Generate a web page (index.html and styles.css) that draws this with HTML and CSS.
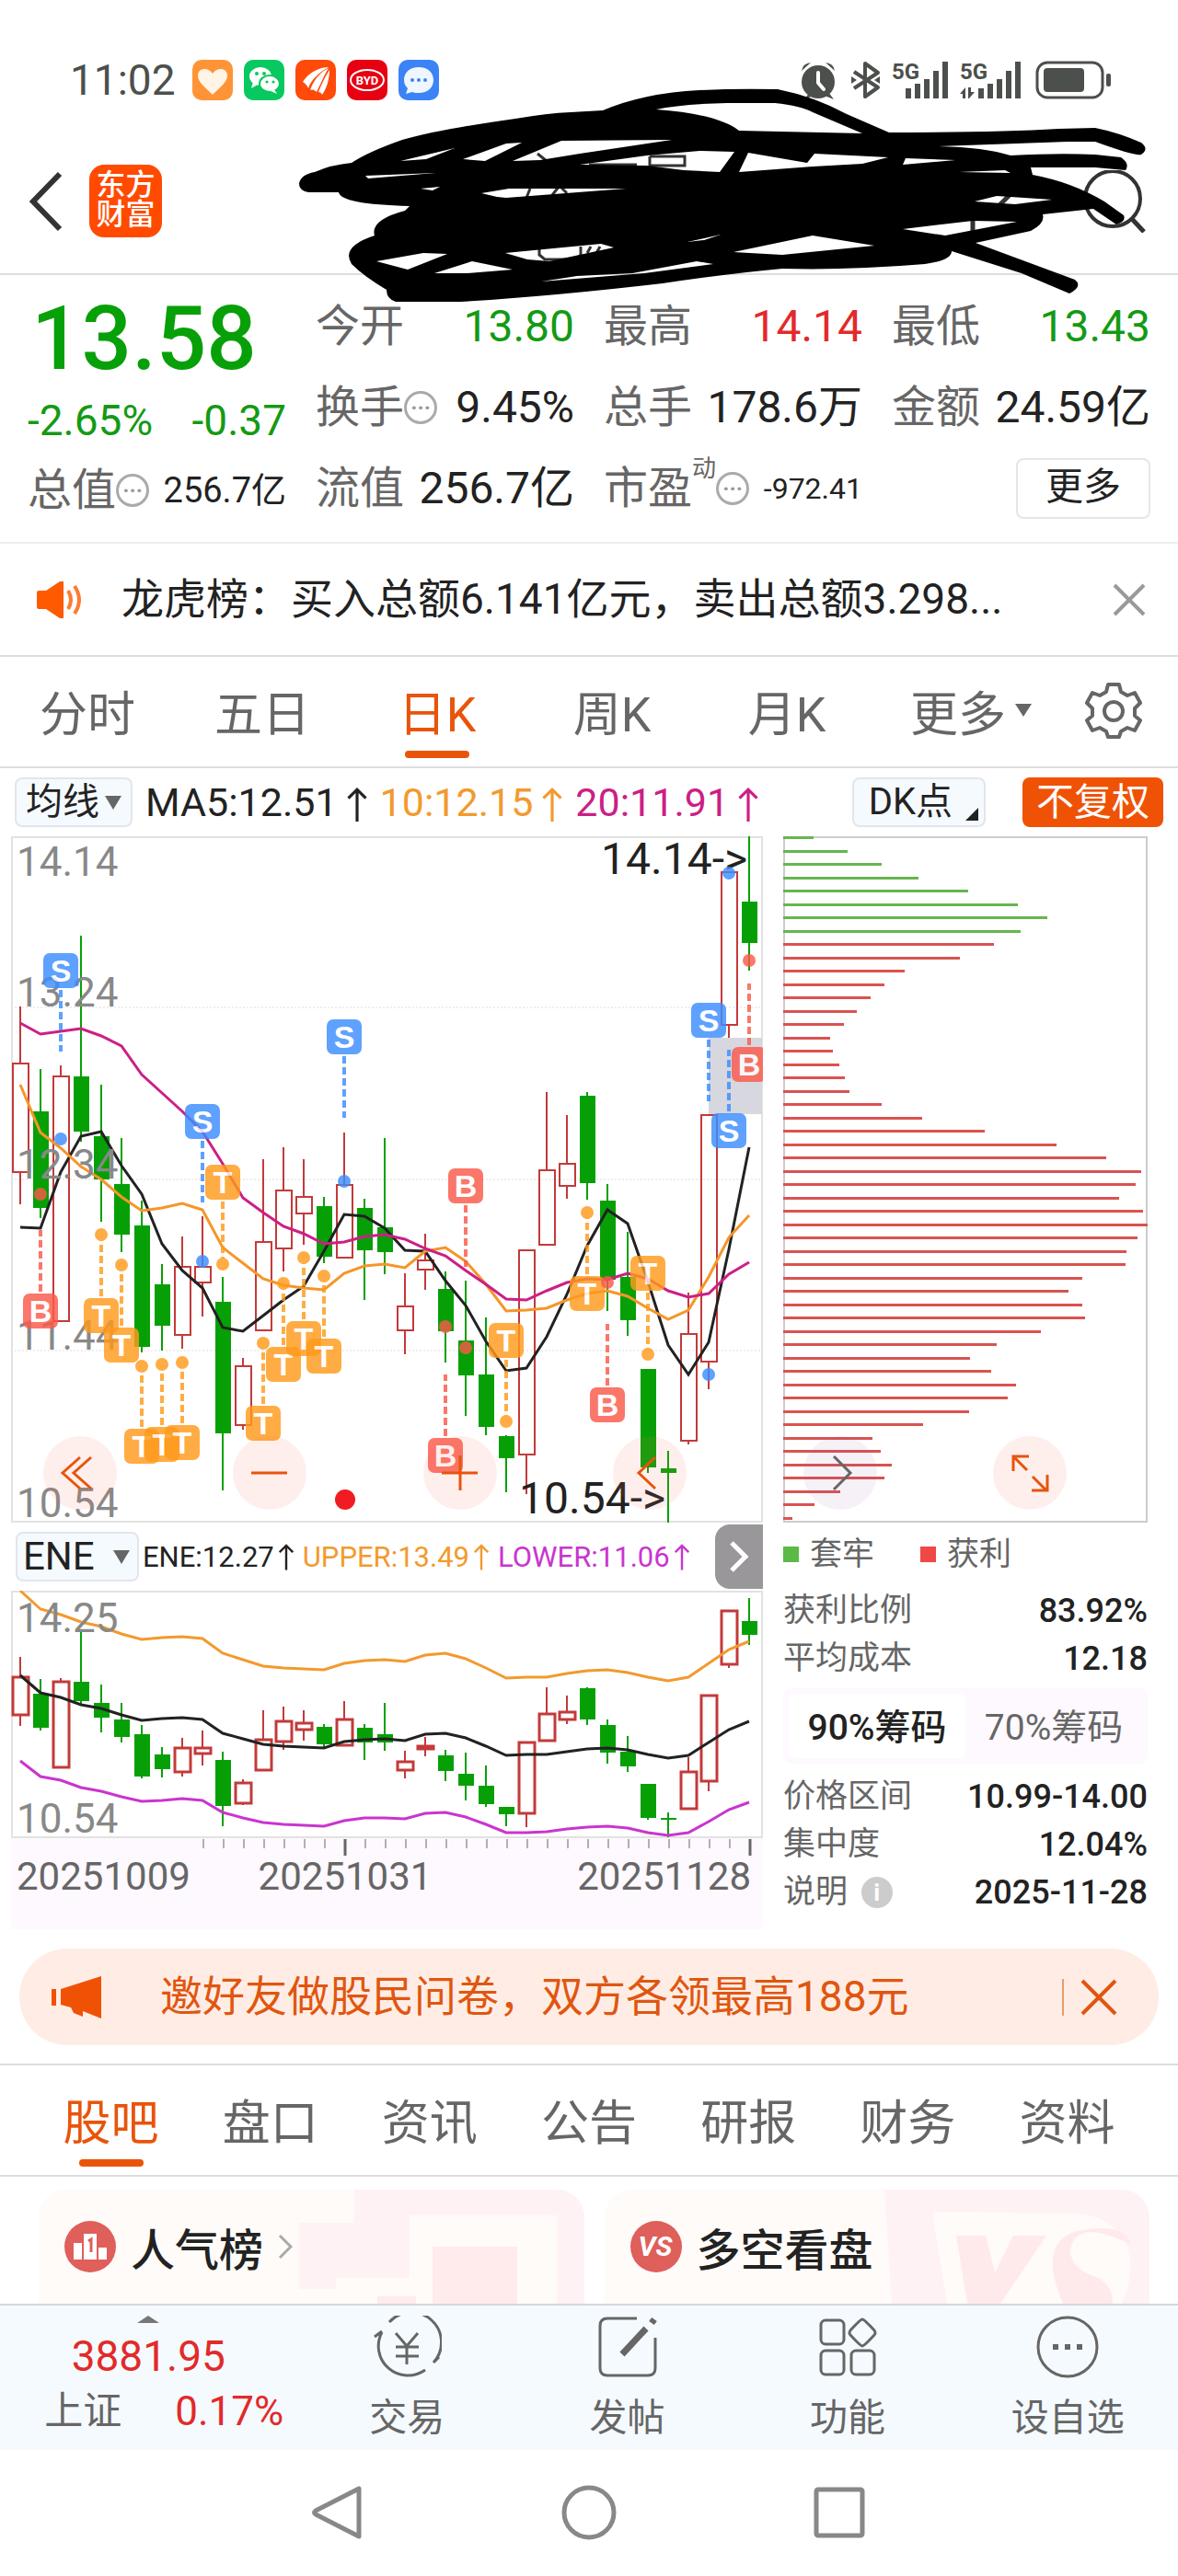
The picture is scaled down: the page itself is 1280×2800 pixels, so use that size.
FILE: index.html
```
<!DOCTYPE html>
<html lang="zh-CN">
<head>
    <meta charset="UTF-8">
    <meta name="viewport" content="width=device-width, initial-scale=1.0">
    <title>日K</title>
    <link rel="stylesheet" href="styles.css">
</head>
<body>
    <div class="status-bar">
        <span class="time">11:02</span>
        <div class="apps">
            <svg class="app app-health" viewBox="0 0 44 44"><path fill="#fff4e6" d="M22 38C12 28 6 24 6 17c0-8 11-10 16-2 5-8 16-6 16 2 0 7-6 11-16 21z"/></svg>
            <svg class="app app-wechat" viewBox="0 0 44 44"><ellipse cx="18" cy="18" rx="12" ry="10" fill="#fff"/><path d="M10 24l-2 7 7-4z" fill="#fff"/><ellipse cx="28" cy="26" rx="11" ry="9" fill="#fff" stroke="#07c95f" stroke-width="2"/><path d="M33 32l3 5-7-3z" fill="#fff"/><g fill="#07c95f"><circle cx="14" cy="15" r="2"/><circle cx="22" cy="15" r="2"/><circle cx="25" cy="24" r="1.6"/><circle cx="32" cy="24" r="1.6"/></g></svg>
            <svg class="app app-news" viewBox="0 0 44 44"><g fill="#fff"><path d="M8 24C14 14 26 8 36 8 26 14 18 20 14 31c-1-3-3-5-6-7z"/><path d="M16 33C20 22 26 14 36 9c-5 8-8 16-13 26-2-2-4-3-7-2z"/><path d="M25 35c3-8 7-16 12-24 0 10-3 20-8 27-1-2-2-3-4-3z"/></g></svg>
            <svg class="app app-byd" viewBox="0 0 44 44"><ellipse cx="22" cy="22" rx="18" ry="11" fill="none" stroke="#fff" stroke-width="2"/><text x="22" y="27" text-anchor="middle" class="byd">BYD</text></svg>
            <svg class="app app-chat" viewBox="0 0 44 44"><path fill="#eef6ff" d="M22 8c10 0 16 6 16 14s-6 14-16 14c-3 0-5 0-7-1l-7 2 2-6c-3-3-4-6-4-9C6 14 12 8 22 8z"/><g fill="#3b83f6"><circle cx="15" cy="22" r="2"/><circle cx="22" cy="22" r="2"/><circle cx="29" cy="22" r="2"/></g></svg>
        </div>
        <svg class="signals" viewBox="0 0 342 42" fill="#4c504c">
            <circle cx="21" cy="23" r="18"/><path d="M3 11q1-8 10-9zM39 11q-1-8-10-9zM6 42l6-8 4 4zM38 42l-6-8-4 4z"/>
            <path d="M21 13v11l6 7" fill="none" stroke="#fff" stroke-width="4" stroke-linecap="round" stroke-linejoin="round"/>
            <path d="M60 12l26 17-14 10V3l14 10-26 17" fill="none" stroke="#4c504c" stroke-width="4" stroke-linejoin="round"/><path d="M57 17l6 4-6 4zM88 17l-6 4 6 4z"/>
            <text x="101" y="20" class="net">5G</text><text x="175" y="20" class="net">5G</text>
            <path d="M116 30h6v11h-6zM126 25h6v16h-6zM136 20h6v21h-6zM146 11h6v30h-6zM156 1h6v40h-6z"/>
            <path d="M195 30h6v11h-6zM205 25h6v16h-6zM215 20h6v21h-6zM225 11h6v30h-6zM235 1h6v40h-6z"/>
            <path d="M175 36l6-7v12h-3v-5zM184 41v-12h3v5h4l-6 7z"/>
            <rect x="259" y="2" width="71" height="38" rx="11" fill="none" stroke="#4c504c" stroke-width="3"/>
            <rect x="266" y="8" width="44" height="26" rx="4"/><rect x="334" y="14" width="5" height="14" rx="2"/>
        </svg>
    </div>

    <header class="top-bar">
        <button class="icon-btn" aria-label="返回"><svg width="36" height="66" viewBox="0 0 36 66"><path d="M33 3L4 33l29 30" fill="none" stroke="#333" stroke-width="6"/></svg></button>
        <a class="logo" href="#">东方<br>财富</a>
        <button class="icon-btn search" aria-label="搜索"><svg width="68" height="68" viewBox="0 0 68 68" fill="none" stroke="#333" stroke-width="4"><circle cx="32" cy="31" r="30"/><path d="M53 53l13 14" stroke-width="5"/></svg></button>
        <svg class="scribble" viewBox="0 0 1280 300">
            <g fill="none" stroke="#333" stroke-width="3">
                <path d="M584 167l10 8M572 215l4-10M600 212l8-10 8 8M640 179h52M706 170h38v10h-38v-10M586 269v8l6 5h34l5-5v-9M642 268l-4 7M652 268l-4 7"/>
                <path d="M1086 223l12-12M1057 238v14" stroke-width="5"/>
            </g>
            <path fill="#000" fill-rule="evenodd" d="M325 200Q326 190 342 187Q360 179 382 177Q400 165 437 152Q480 140 560 129Q595 123 620 122L655 120Q700 101 760 98Q800 96 845 97Q885 105 920 124L966 144Q1080 144 1150 140L1190 139Q1215 144 1240 155Q1249 162 1240 168Q1234 170 1190 154L1160 154L1020 159Q1070 160 1098 169Q1150 166 1190 168L1218 171Q1228 178 1223 185L1190 182L1120 182L1122 190Q1165 198 1200 219L1221 234Q1224 241 1213 244L1188 227L1133 233Q1136 243 1120 251L1060 264L1168 304Q1177 311 1162 319L1110 297L1034 273Q1034 283 1005 287Q920 294 850 292Q795 297 720 308Q600 322 500 328L430 328Q420 325 420 315Q395 300 382 287Q370 268 407 256Q402 239 440 229L445 224Q370 222 368 209L335 209Q325 207 325 200Z
                M435 175L494 161L463 173ZM503 173L550 156L567 155L527 175ZM557 175L610 153L730 152L630 167L587 174Z
                M630 179L703 169L760 164L798 165L782 187L743 185L703 180ZM397 191L473 188L400 194ZM457 205L478 203L470 207Z
                M523 210L553 205L680 205L550 215L540 214ZM409 284L460 275L486 276L443 293ZM472 297L513 284L557 293L507 297Z
                M549 275L653 265L667 269L597 284L573 282ZM588 306L627 300L687 297L757 284L775 287L700 297ZM747 263L783 255L765 261Z
                M713 119Q740 113 790 112L842 112Q870 115 883 122L937 145L803 142Q780 124 713 119Z
                M885 167L965 171L937 178L883 181L803 187L813 166L877 177ZM984 172L1038 174L981 179ZM1042 187L1092 185L1098 188Z
                M1059 219L1083 213L1143 217L1103 222ZM981 249L1057 240L1105 241L1027 256ZM797 274L883 256L950 267L850 277Z"/>
        </svg>
    </header>

    <section class="quote">
        <div class="summary">
            <strong class="price">13.58</strong>
            <div class="change"><span>-2.65%</span><span>-0.37</span></div>
            <div class="cell"><span class="name">总值</span><i class="more-dot">···</i><b class="mid">256.7亿</b></div>
        </div>
        <div class="stats">
            <div class="cell"><span class="name">今开</span><b class="down">13.80</b></div>
            <div class="cell"><span class="name">最高</span><b class="up">14.14</b></div>
            <div class="cell"><span class="name">最低</span><b class="down">13.43</b></div>
            <div class="cell"><span class="name">换手</span><i class="more-dot">···</i><b>9.45%</b></div>
            <div class="cell"><span class="name">总手</span><b>178.6万</b></div>
            <div class="cell"><span class="name">金额</span><b>24.59亿</b></div>
            <div class="cell"><span class="name">流值</span><b>256.7亿</b></div>
            <div class="cell"><span class="name">市盈</span><sup>动</sup><i class="more-dot">···</i><b class="small">-972.41</b></div>
            <div class="cell"><button class="more-btn">更多</button></div>
        </div>
    </section>

    <section class="notice">
        <svg width="50" height="44" viewBox="0 0 50 44"><path d="M2 12h8L25 2h4v40h-4L10 32H2q-2 0-2-3V15q0-3 2-3z" fill="#ff5a00"/><path d="M34 12q6 10 0 20M41 7q10 15 0 30" fill="none" stroke="#ff7a33" stroke-width="4"/></svg>
        <p>龙虎榜：买入总额6.141亿元，卖出总额3.298...</p>
        <button class="icon-btn" aria-label="关闭"><svg width="36" height="36" viewBox="0 0 36 36"><path d="M2 2l32 32M34 2L2 34" stroke="#999" stroke-width="4"/></svg></button>
    </section>

    <nav class="period-tabs">
        <button>分时</button>
        <button>五日</button>
        <button class="active">日K</button>
        <button>周K</button>
        <button>月K</button>
        <button>更多<span class="caret"></span></button>
        <button aria-label="设置"><svg width="62" height="62" viewBox="0 0 62 62" fill="none" stroke="#666" stroke-width="4" stroke-linejoin="round"><path d="M25 3h12l2 8 7 4 8-3 6 11-6 6v8l6 5-6 11-8-3-7 4-2 6H25l-2-6-7-4-8 3-6-11 6-5v-8l-6-6 6-11 8 3 7-4z"/><circle cx="31" cy="32" r="10"/></svg></button>
    </nav>

    <section class="indicator-row">
        <label class="picker"><select aria-label="均线"><option>均线</option></select></label>
        <span class="ma ma5">MA5:12.51<svg class="arrow" viewBox="0 0 20 36"><path d="M10 36V3M1 12l9-9 9 9"/></svg></span>
        <span class="ma ma10">10:12.15<svg class="arrow" viewBox="0 0 20 36"><path d="M10 36V3M1 12l9-9 9 9"/></svg></span>
        <span class="ma ma20">20:11.91<svg class="arrow" viewBox="0 0 20 36"><path d="M10 36V3M1 12l9-9 9 9"/></svg></span>
        <button class="dk-btn">DK点</button>
        <button class="adjust-btn">不复权</button>
    </section>

    <main class="market">
        <div class="left">
            <svg id="kline" viewBox="0 0 817 746"></svg>
            <div class="ene-row">
                <label class="picker"><select aria-label="指标"><option>ENE</option></select></label>
                <span class="ma5">ENE:12.27<svg class="arrow" viewBox="0 0 20 36"><path d="M10 36V3M1 12l9-9 9 9"/></svg></span>
                <span class="ma10">UPPER:13.49<svg class="arrow" viewBox="0 0 20 36"><path d="M10 36V3M1 12l9-9 9 9"/></svg></span>
                <span class="lower">LOWER:11.06<svg class="arrow" viewBox="0 0 20 36"><path d="M10 36V3M1 12l9-9 9 9"/></svg></span>
                <button class="next-btn" aria-label="下一项"><svg width="22" height="36" viewBox="0 0 22 36"><path d="M3 3l15 15L3 33" fill="none" stroke="#fff" stroke-width="5"/></svg></button>
            </div>
            <svg id="ene" viewBox="0 0 817 368"></svg>
        </div>
        <div class="right">
            <svg id="chips" viewBox="0 0 396 746"></svg>
            <div class="legend"><span class="lose">套牢</span><span class="gain">获利</span></div>
            <dl class="chip-info">
                <div><dt>获利比例</dt><dd>83.92%</dd></div>
                <div><dt>平均成本</dt><dd>12.18</dd></div>
            </dl>
            <div class="toggle"><button class="on">90%筹码</button><button>70%筹码</button></div>
            <dl class="chip-info">
                <div><dt>价格区间</dt><dd>10.99-14.00</dd></div>
                <div><dt>集中度</dt><dd>12.04%</dd></div>
                <div><dt>说明 <i class="info">i</i></dt><dd>2025-11-28</dd></div>
            </dl>
        </div>
        <div class="chart-tools">
            <button aria-label="最前"><svg viewBox="0 0 80 80"><path d="M40 23L21 40l19 17M52 23L33 40l19 17"/></svg></button>
            <button aria-label="缩小"><svg viewBox="0 0 80 80"><path d="M20 40h39"/></svg></button>
            <button aria-label="放大"><svg viewBox="0 0 80 80"><path d="M20 40h39M40 21v38"/></svg></button>
            <button aria-label="左移"><svg viewBox="0 0 80 80"><path d="M46 23L28 40l18 17"/></svg></button>
            <button class="grey" aria-label="右移"><svg viewBox="0 0 80 80"><path d="M33 22l18 18-18 18"/></svg></button>
            <button aria-label="全屏"><svg viewBox="0 0 80 80"><path d="M22 38V22h17M23 23l14 14M43 44l15 15M59 42v17H42"/></svg></button>
        </div>
    </main>

    <section class="banner">
        <svg width="56" height="48" viewBox="0 0 56 48" fill="#f05205"><path d="M0 15h5v18H0zM10 15L54 1v46L34 39v6l-10-4-3-6-11-3z"/></svg>
        <a href="#">邀好友做股民问卷，双方各领最高188元</a>
        <button class="icon-btn" aria-label="关闭"><svg width="40" height="40" viewBox="0 0 40 40"><path d="M2 2l36 36M38 2L2 38" stroke="#e0560f" stroke-width="4"/></svg></button>
    </section>

    <nav class="info-tabs">
        <button class="active">股吧</button>
        <button>盘口</button>
        <button>资讯</button>
        <button>公告</button>
        <button>研报</button>
        <button>财务</button>
        <button>资料</button>
    </nav>

    <section class="cards">
        <a class="card" href="#">
            <svg width="56" height="56" viewBox="0 0 56 56"><circle cx="28" cy="28" r="28" fill="#df5f5b"/><path d="M10 24h9v18h-9zM21 14h14v28H21zM37 29h9v13h-9z" fill="#fff"/><path d="M26 22l3-2v14" fill="none" stroke="#df5f5b" stroke-width="3"/></svg>
            <span>人气榜</span>
            <svg width="16" height="28" viewBox="0 0 16 28"><path d="M2 2l12 12L2 26" fill="none" stroke="#aaa" stroke-width="3"/></svg>
            <svg class="deco" viewBox="0 0 310 124"><path fill="#fff2f4" d="M60 0h250v124h-30V28H120v68H40v12H0V36h60z"/><path fill="#ffebec" d="M145 62h92v62h-92zM85 116h42v8H85z"/></svg>
        </a>
        <a class="card" href="#">
            <svg width="56" height="56" viewBox="0 0 56 56"><circle cx="28" cy="28" r="28" fill="#df5f5b"/><text x="27" y="38" text-anchor="middle" class="vs">VS</text></svg>
            <span>多空看盘</span>
            <svg class="deco" viewBox="0 0 310 124"><path fill="#fff2f4" d="M22 0h288v124h-30C300 80 290 30 230 26L74 24l16 100H30z"/><path fill="#ffeaeb" d="M100 50h32l10 40 20-40h36l-50 74h-36zM290 60q-60-30-66 6 0 20 30 30 16 8 16 28h-54q-30-70 20-80 50-8 54 16z"/></svg>
        </a>
    </section>

    <nav class="bottom-nav">
        <a class="index" href="#">
            <span class="caret-up"></span>
            <span class="index-value">3881.95</span>
            <span class="index-row"><em>上证</em><span>0.17%</span></span>
        </a>
        <a href="#"><svg width="76" height="68" viewBox="0 0 76 68"><path d="M19 7A32 32 0 0 1 67 51M58 59A32 32 0 0 1 11 18M3 23l8-6M67 51l6-6M26 19l12 14 12-14M38 33v20M26 34h25M26 44h25"/></svg>交易</a>
        <a href="#"><svg width="68" height="68" viewBox="0 0 68 68"><path d="M44 3H12q-8 0-8 8v46q0 8 8 8h44q8 0 8-8V24"/><path d="M28 42L54 14M60 8l3-4" stroke-width="7"/></svg>发帖</a>
        <a href="#"><svg width="64" height="68" viewBox="0 0 64 68"><rect x="3" y="5" width="25" height="26" rx="5"/><rect x="3" y="38" width="25" height="26" rx="5"/><rect x="36" y="38" width="25" height="26" rx="5"/><path d="M48 4q2 0 13 12 2 3 0 5-11 12-13 12T35 21q-2-2 0-5Q46 4 48 4z"/></svg>功能</a>
        <a href="#"><svg width="68" height="68" viewBox="0 0 68 68"><circle cx="34" cy="34" r="32"/><path d="M18 34h6M31 34h6M44 34h6" stroke-width="6"/></svg>设自选</a>
    </nav>

    <div class="system-nav">
        <button aria-label="返回"><svg width="60" height="60" viewBox="0 0 60 60"><path d="M52 4v52L5 32q-3-2 0-4z"/></svg></button>
        <button aria-label="主页"><svg width="60" height="60" viewBox="0 0 60 60"><circle cx="30" cy="30" r="27"/></svg></button>
        <button aria-label="多任务"><svg width="60" height="60" viewBox="0 0 60 60"><rect x="5" y="5" width="50" height="50" rx="2"/></svg></button>
    </div>

    <script src="script.js"></script>
</body>
</html>
```
FILE: styles.css
```
* {
    box-sizing: border-box;
}

body {
    margin: 0;
    background-color: #fff;
    color: #222;
    font-family: Roboto, "Noto Sans CJK SC", sans-serif;
}

button, select {
    font-family: inherit;
    color: inherit;
    background: none;
    border: none;
    padding: 0;
    margin: 0;
    cursor: pointer;
}

a {
    color: inherit;
    text-decoration: none;
}

svg {
    display: block;
    flex-shrink: 0;
}

.icon-btn {
    display: flex;
    flex-shrink: 0;
}

.down { color: #149a14; }
.up { color: #e22a2a; }

/* status bar */
.status-bar {
    display: flex;
    align-items: center;
    padding: 60px 70px 0 76px;
    height: 114px;
}

.time {
    font-size: 46px;
    color: #4c504c;
    margin-right: 18px;
}

.apps {
    display: flex;
    gap: 12px;
    flex: 1;
}

.app {
    width: 44px;
    height: 44px;
    border-radius: 10px;
}

.app-health { background: #ff9436; }
.app-wechat { background: #07c95f; }
.app-news { background: #ff4a0a; }
.app-byd { background: #e60012; }
.app-chat { background: #3b83f6; }

.byd {
    font-size: 13px;
    font-weight: 700;
    fill: #fff;
}

.signals {
    width: 342px;
    overflow: visible;
}

.net {
    font-size: 24px;
    font-weight: 700;
}

/* header */
.top-bar {
    position: relative;
    display: flex;
    align-items: center;
    height: 185px;
    padding: 26px 35px 0 32px;
    border-bottom: 2px solid #ddd;
}

.logo {
    width: 79px;
    height: 79px;
    margin-left: 29px;
    padding-top: 6px;
    border-radius: 16px;
    background: #ff4a00;
    color: #fff;
    font-size: 32px;
    font-weight: 500;
    line-height: 32px;
    text-align: center;
}

.search {
    margin-left: auto;
}

.scribble {
    position: absolute;
    left: 0;
    top: -114px;
    width: 100%;
    height: auto;
    overflow: visible;
    z-index: 2;
    pointer-events: none;
}

/* quote */
.quote {
    display: grid;
    grid-template-columns: minmax(0, 281fr) minmax(0, 907fr);
    gap: 32px;
    padding: 12px 30px 12px;
    border-bottom: 2px solid #eee;
}

.price {
    display: block;
    padding-left: 4px;
    font-size: 96px;
    font-weight: 500;
    line-height: 114px;
    color: #08a008;
}

.change {
    display: flex;
    justify-content: space-between;
    font-size: 46px;
    line-height: 64px;
    color: #149a14;
}

.stats {
    display: grid;
    grid-template-columns: repeat(3, minmax(0, 1fr));
    align-content: start;
    column-gap: 32px;
}

.cell {
    display: flex;
    align-items: center;
    height: 88px;
    font-size: 48px;
    line-height: 60px;
    white-space: nowrap;
}

.cell .name {
    color: #666;
}

.cell b {
    margin-left: auto;
    font-weight: 400;
}

.cell .mid {
    font-size: 38px;
}

.cell .small {
    font-size: 32px;
}

.cell sup {
    align-self: flex-start;
    font-size: 26px;
    line-height: 44px;
    color: #666;
}

.more-dot {
    width: 36px;
    height: 36px;
    border: 3px solid #aaa;
    border-radius: 50%;
    color: #999;
    font-size: 24px;
    font-style: normal;
    font-weight: 700;
    line-height: 30px;
    text-align: center;
}

.more-btn {
    margin-left: auto;
    padding: 0 30px 4px;
    border: 2px solid #e6e6e6;
    border-radius: 8px;
    font-size: 41px;
    line-height: 58px;
}

/* notice */
.notice {
    display: flex;
    align-items: center;
    padding: 0 35px 0 40px;
    border-bottom: 2px solid #ddd;
}

.notice p {
    flex: 1;
    margin: 0 0 0 42px;
    font-size: 46px;
    line-height: 121px;
}

/* tabs */
.period-tabs {
    display: grid;
    grid-template-columns: repeat(5, 19fr) 21fr 10fr;
    padding-right: 20px;
    border-bottom: 2px solid #ddd;
}

.info-tabs {
    display: grid;
    grid-template-columns: repeat(7, 1fr);
    padding: 0 34px;
    border-top: 2px solid #ddd;
    border-bottom: 2px solid #ddd;
}

.period-tabs button,
.info-tabs button {
    position: relative;
    display: flex;
    align-items: center;
    justify-content: center;
    height: 119px;
    padding-bottom: 3px;
    font-size: 52px;
    color: #666;
}

.period-tabs .active,
.info-tabs .active {
    color: #e8540c;
}

.period-tabs .active::after,
.info-tabs .active::after {
    content: "";
    position: absolute;
    bottom: 9px;
    left: calc(50% - 35px);
    width: 70px;
    height: 8px;
    border-radius: 4px;
    background: #ea5409;
}

.caret {
    margin-left: 10px;
    border: 9px solid transparent;
    border-top: 14px solid #666;
    border-bottom: 0;
}

/* indicator row */
.indicator-row {
    display: flex;
    align-items: center;
    height: 74px;
    padding: 0 16px;
}

.picker {
    position: relative;
    display: flex;
    flex-shrink: 0;
}

.picker select {
    appearance: none;
    width: 128px;
    height: 54px;
    padding-left: 10px;
    border: 2px solid #e2e6ec;
    border-radius: 8px;
    background: #f5faff;
    font-size: 40px;
    line-height: 50px;
}

.picker::after {
    content: "";
    position: absolute;
    right: 12px;
    top: 20px;
    border: 9px solid transparent;
    border-top: 15px solid #666;
    border-bottom: 0;
    pointer-events: none;
}

.arrow {
    display: inline-block;
    width: 22px;
    height: 38px;
    margin-left: 10px;
    vertical-align: -6px;
    fill: none;
    stroke: currentColor;
    stroke-width: 3;
}

.ma {
    margin-left: 14px;
    font-size: 43px;
    white-space: nowrap;
}

.ma5 { color: #222; }
.ma10 { color: #f29a2e; }
.ma20 { color: #cc1f86; }
.lower { color: #c935cf; }

.dk-btn {
    position: relative;
    height: 54px;
    margin-left: auto;
    padding: 0 34px 0 16px;
    border: 2px solid #e2e6ec;
    border-radius: 8px;
    background: #f5faff;
    font-size: 40px;
    line-height: 48px;
}

.dk-btn::after {
    content: "";
    position: absolute;
    right: 6px;
    bottom: 5px;
    border-left: 14px solid transparent;
    border-bottom: 14px solid #222;
}

.adjust-btn {
    height: 54px;
    margin-left: 40px;
    padding: 0 15px;
    border-radius: 8px;
    background: #f05205;
    color: #fff;
    font-size: 41px;
    line-height: 50px;
}

/* charts */
.market {
    position: relative;
    display: grid;
    grid-template-columns: minmax(0, 817fr) minmax(0, 396fr);
    column-gap: 22px;
    padding: 0 33px 0 12px;
}

#kline, #ene, #chips {
    width: 100%;
    height: auto;
}

.axis {
    font-size: 44px;
    fill: #888;
}

.date {
    font-size: 42px;
    fill: #666;
}

.peak {
    font-size: 48px;
    fill: #222;
}

.badge {
    font-family: "Liberation Sans", sans-serif;
    font-size: 34px;
    font-weight: 700;
    fill: #fff;
    text-anchor: middle;
}

.ene-row {
    display: flex;
    align-items: center;
    height: 74px;
    padding-left: 5px;
    font-size: 31px;
    white-space: nowrap;
}

.ene-row .picker {
    margin-right: 4px;
}

.ene-row .picker select {
    width: 134px;
    padding-left: 6px;
    font-size: 42px;
}

.ene-row .picker::after {
    right: 10px;
}

.ene-row span {
    margin-right: 10px;
}

.ene-row .arrow {
    width: 16px;
    height: 34px;
    margin-left: 5px;
}

.next-btn {
    display: flex;
    flex-shrink: 0;
    align-items: center;
    justify-content: center;
    align-self: stretch;
    width: 52px;
    margin: 2px 0 2px auto;
    border-radius: 16px 0 0 16px;
    background: #999799;
}

.legend {
    display: flex;
    gap: 50px;
    font-size: 35px;
    line-height: 70px;
    color: #666;
}

.legend span::before {
    content: "";
    display: inline-block;
    width: 17px;
    height: 17px;
    margin-right: 12px;
    background: #5cb946;
    vertical-align: 3px;
}

.legend .gain::before {
    background: #f04844;
}

.chip-info {
    margin: 0;
}

.chip-info div {
    display: flex;
    justify-content: space-between;
    align-items: center;
    font-size: 35px;
    line-height: 52px;
}

.chip-info dt {
    color: #666;
}

.chip-info dd {
    margin: 0;
    font-size: 36px;
    font-weight: 500;
}

.info {
    display: inline-block;
    width: 34px;
    height: 34px;
    margin-left: 6px;
    border-radius: 50%;
    background: #ccc;
    color: #fff;
    font-size: 26px;
    font-style: normal;
    font-weight: 700;
    line-height: 34px;
    text-align: center;
    vertical-align: 2px;
}

.toggle {
    display: grid;
    grid-template-columns: 1fr 1fr;
    margin: 6px 0 10px;
    padding: 6px;
    border-radius: 8px;
    background: #fdf9fe;
}

.toggle button {
    height: 70px;
    padding-bottom: 5px;
    border-radius: 6px;
    color: #666;
    font-size: 39px;
}

.toggle .on {
    background: #fff;
    color: #222;
    font-weight: 500;
}

.chart-tools {
    position: absolute;
    top: 652px;
    left: 47px;
    right: 121px;
    display: flex;
    justify-content: space-between;
}

.chart-tools button {
    width: 80px;
    height: 80px;
    border-radius: 50%;
    background: rgba(250, 110, 80, 0.11);
}

.chart-tools path {
    fill: none;
    stroke: #e8540c;
    stroke-width: 3;
}

.chart-tools .grey {
    background: rgba(150, 90, 170, 0.09);
}

.chart-tools .grey path {
    stroke: #666;
}

/* banner */
.banner {
    display: flex;
    align-items: center;
    margin: 21px 21px 20px;
    padding: 0 45px 0 35px;
    border-radius: 52px;
    background: #ffede5;
    color: #e0560f;
    font-size: 46px;
    line-height: 105px;
}

.banner a {
    margin-left: 62px;
}

.banner .icon-btn {
    margin-left: auto;
    padding: 0 0 0 18px;
    border-left: 2px solid #eb9a70;
}

/* cards */
.cards {
    display: grid;
    grid-template-columns: 1fr 1fr;
    gap: 22px;
    padding: 14px 31px 0 42px;
}

.card {
    position: relative;
    display: flex;
    align-items: center;
    gap: 16px;
    height: 124px;
    padding-left: 28px;
    border-radius: 30px 30px 0 0;
    background: #fffbf8;
    font-size: 48px;
    font-weight: 500;
    overflow: hidden;
}

.card > * {
    position: relative;
    z-index: 1;
}

.card .deco {
    position: absolute;
    z-index: 0;
    right: 0;
    top: 0;
    width: 310px;
}

.vs {
    font-size: 30px;
    font-weight: 700;
    font-style: italic;
    fill: #fff;
}

/* bottom nav */
.bottom-nav {
    display: grid;
    grid-template-columns: 322fr repeat(4, 239fr);
    border-top: 2px solid #d5d8de;
    background: #f5faff;
}

.bottom-nav a {
    display: flex;
    flex-direction: column;
    align-items: center;
    height: 157px;
    padding-top: 11px;
    color: #666;
    font-size: 41px;
    line-height: 86px;
}

.bottom-nav svg {
    fill: none;
    stroke: #666;
    stroke-width: 3;
}

.caret-up {
    border: 12px solid transparent;
    border-top: 0;
    border-bottom: 8px solid #777;
}

.bottom-nav .index-value {
    font-size: 46px;
    line-height: 72px;
    color: #e22a2a;
}

.index-row {
    display: flex;
    align-items: center;
    gap: 58px;
    padding-left: 34px;
    font-size: 44px;
    line-height: 48px;
    color: #e22a2a;
}

.index-row em {
    font-size: 42px;
    font-style: normal;
    color: #666;
}

.system-nav {
    display: flex;
    justify-content: center;
    gap: 212px;
    padding: 38px 0;
}

.system-nav svg {
    fill: none;
    stroke: #888;
    stroke-width: 5;
    stroke-linejoin: round;
}
```
FILE: script.js
```
// vertical levels: 59 is a price of 14.14, 1522 is 10.54
const TOP = 59;
const BOTTOM = 1522;
const STEP = 22;

// [rising, high, body top, body bottom, low]
const candles = [
    [1, 421, 543, 774, 843], [0, 556, 645, 852, 872], [1, 547, 570, 1092, 1092], [0, 270, 571, 688, 710],
    [0, 588, 698, 791, 880], [0, 702, 800, 908, 945], [0, 836, 889, 1148, 1160], [0, 970, 1015, 1103, 1156],
    [1, 913, 977, 1121, 1152], [1, 868, 977, 1011, 1083], [0, 999, 1052, 1331, 1453], [1, 1170, 1189, 1315, 1323],
    [1, 747, 924, 1112, 1112], [1, 722, 815, 938, 986], [1, 747, 827, 864, 929], [0, 828, 848, 956, 968],
    [1, 690, 803, 958, 958], [0, 832, 852, 941, 1047], [0, 702, 893, 945, 993], [1, 991, 1062, 1112, 1164],
    [1, 906, 964, 983, 1026], [0, 987, 1023, 1115, 1181], [0, 1007, 1133, 1209, 1295], [0, 1084, 1206, 1319, 1335],
    [0, 1336, 1337, 1384, 1457], [1, 941, 941, 1377, 1461], [1, 604, 770, 930, 930], [1, 654, 758, 804, 831],
    [0, 604, 612, 799, 834], [0, 800, 836, 1004, 1071], [0, 902, 999, 1091, 1124], [0, 1194, 1194, 1404, 1416],
    [0, 1369, 1406, 1416, 1522], [1, 1031, 1120, 1348, 1355], [1, 653, 653, 1178, 1238], [1, 135, 135, 462, 489],
    [0, 59, 198, 286, 346]
];

const ma5 = [892, 894, 774, 698, 689, 762, 822, 928, 985, 1022, 1107, 1115, 1080, 1048, 1018, 943, 865, 868, 895, 941, 944, 1006, 1060, 1135, 1198, 1193, 1126, 1035, 931, 856, 884, 1008, 1143, 1206, 1138, 940, 722];
const ma10 = [588, 690, 724, 764, 791, 828, 858, 852, 842, 856, 936, 968, 1003, 1016, 1021, 1025, 991, 974, 971, 979, 943, 936, 965, 1015, 1070, 1069, 1065, 1047, 1034, 1027, 1040, 1065, 1089, 1069, 998, 914, 867];
const ma20 = [457, 481, 474, 468, 484, 506, 566, 607, 645, 688, 758, 829, 861, 891, 906, 927, 924, 913, 908, 918, 938, 953, 984, 1015, 1046, 1048, 1028, 1010, 1002, 1004, 991, 1002, 1027, 1042, 1033, 993, 967];

const upper = [240, 299, 318, 342, 357, 381, 399, 393, 390, 396, 444, 465, 486, 492, 494, 497, 477, 467, 465, 470, 450, 444, 463, 493, 524, 522, 522, 510, 500, 497, 507, 522, 534, 521, 478, 431, 405];
const middle = [515, 572, 588, 611, 625, 645, 662, 657, 654, 660, 705, 724, 741, 747, 750, 752, 732, 726, 723, 729, 708, 705, 720, 747, 777, 774, 774, 765, 756, 752, 759, 774, 786, 777, 735, 693, 666];
const lower = [795, 845, 858, 881, 895, 911, 927, 924, 918, 923, 963, 981, 996, 1002, 1005, 1008, 990, 981, 981, 984, 966, 963, 978, 1002, 1029, 1028, 1025, 1017, 1010, 1008, 1014, 1029, 1038, 1028, 992, 953, 930];

// [letter, day, badge level, dot level]
const marks = [
    ['S', 2, 346, 705], ['B', 1, 1071, 821], ['T', 4, 1080, 908], ['T', 5, 1144, 972], ['T', 6, 1360, 1188],
    ['T', 7, 1356, 1184], ['T', 8, 1352, 1180], ['S', 9, 666, 966], ['T', 10, 797, 970], ['T', 12, 1311, 1139],
    ['T', 13, 1185, 1013], ['T', 14, 1129, 957], ['T', 15, 1168, 996], ['S', 16, 487, 795], ['B', 21, 1379, 1104],
    ['B', 22, 805, 1149], ['T', 24, 1134, 1307], ['T', 28, 1034, 862], ['B', 29, 1270, 1010], ['T', 31, 991, 1164],
    ['S', 34, 451, 1206], ['S', 35, 687, 137], ['B', 36, 546, 323]
];
const markColors = { S: '#3c8dff', B: '#fb5a4a', T: '#ff9a1c' };

// bar lengths, the first 8 are above the current price
const chips = [100, 211, 321, 440, 603, 766, 861, 773, 687, 576, 396, 330, 286, 239, 197, 154, 161, 182, 201, 215, 321, 453, 656, 891, 1053, 1167, 1149, 1094, 1173, 1188, 1155, 1119, 1117, 974, 929, 975, 984, 840, 696, 608, 677, 758, 731, 606, 456, 291, 318, 354, 330, 186, 101, 30];

const x = i => 10 + i * STEP;

function drawCandles(y, stroke) {
    return candles.map(([rising, high, top, bottom, low], i) => {
        const color = rising ? '#c33a3a' : '#06a006';
        const height = Math.max(y(bottom) - y(top), 2);
        const wicks = `<path d="M${x(i)} ${y(high)}V${y(top)}M${x(i)} ${y(bottom)}V${y(low)}" stroke="${color}" stroke-width="2"/>`;
        return wicks + `<rect x="${x(i) - 8}" y="${y(top)}" width="17" height="${height}" fill="${rising ? 'none' : color}" stroke="${color}" stroke-width="${rising ? stroke : 0}"/>`;
    }).join('');
}

function drawLine(values, y, color) {
    const points = values.map((v, i) => `${x(i)},${y(v)}`).join(' ');
    return `<polyline points="${points}" fill="none" stroke="${color}" stroke-width="3"/>`;
}

function drawMark([letter, day, badge, dot], y) {
    const color = markColors[letter];
    const dir = dot > badge ? 1 : -1;
    const by = y(badge);
    return `<g opacity="0.82">
        <path d="M${x(day)} ${by + dir * 21}v${dir * 67}" stroke="${color}" stroke-width="4" stroke-dasharray="8 4"/>
        <circle cx="${x(day)}" cy="${y(dot)}" r="7" fill="${color}"/>
        <rect x="${x(day) - 19}" y="${by - 19}" width="38" height="38" rx="7" fill="${color}"/>
        <text class="badge" x="${x(day)}" y="${by + 12}">${letter}</text>
    </g>`;
}

function drawKline() {
    const y = v => Math.round((v - TOP) / (BOTTOM - TOP) * 746);
    let out = '<rect x="1" y="1" width="815" height="744" fill="none" stroke="#e2e2e2" stroke-width="2"/>';
    [424, 790, 1156].forEach(v => {
        out += `<path d="M0 ${y(v)}H817" stroke="#ddd" stroke-dasharray="2 2"/>`;
    });
    out += `<rect x="758" y="${y(488)}" width="58" height="${y(651) - y(488)}" fill="#d6d7df"/>`;
    out += drawCandles(y, 2);
    out += drawLine(ma5, y, '#222') + drawLine(ma10, y, '#f5962a') + drawLine(ma20, y, '#cc1f86');
    [['14.14', 43], ['13.24', 185], ['12.34', 372], ['11.44', 558], ['10.54', 740]].forEach(([label, ty]) => {
        out += `<text class="axis" x="6" y="${ty}">${label}</text>`;
    });
    out += '<text class="peak" x="800" y="41" text-anchor="end">14.14-&gt;</text>';
    out += '<text class="peak" x="711" y="736" text-anchor="end">10.54-&gt;</text>';
    out += marks.map(m => drawMark(m, y)).join('');
    out += '<circle cx="363" cy="721" r="11" fill="#f01c22"/>';
    document.getElementById('kline').innerHTML = out;
}

function drawEne() {
    const y = v => Math.round(8 + (v - TOP) / (BOTTOM - TOP) * 260);
    const band = v => Math.round((v - 240) / 3);
    let out = '<rect x="0" y="268" width="817" height="100" fill="#fdf9fe"/>';
    out += '<rect x="1" y="1" width="815" height="267" fill="#fff" stroke="#e2e2e2" stroke-width="2"/>';
    out += drawCandles(y, 3);
    out += drawLine(upper, band, '#f29a2e') + drawLine(middle, band, '#222') + drawLine(lower, band, '#c935cf');
    out += '<text class="axis" x="6" y="45">14.25</text><text class="axis" x="6" y="263">10.54</text>';
    for (let i = 9; i < candles.length; i++) {
        const major = i === 16 || i === 36;
        out += `<path d="M${x(i) + 1} 270v${major ? 18 : 10}" stroke="#666" stroke-width="${major ? 3 : 1}"/>`;
    }
    out += '<text class="date" x="6" y="325">20251009</text>';
    out += '<text class="date" x="363" y="325" text-anchor="middle">20251031</text>';
    out += '<text class="date" x="804" y="325" text-anchor="end">20251128</text>';
    document.getElementById('ene').innerHTML = out;
}

function drawChips() {
    let out = '<rect x="1" y="1" width="394" height="744" fill="none" stroke="#ccc" stroke-width="2"/>';
    chips.forEach((length, i) => {
        const y = Math.round(i * 14.5);
        out += `<rect x="0" y="${y}" width="${Math.round(length / 3)}" height="3" fill="${i < 8 ? '#66b550' : '#d95350'}"/>`;
    });
    document.getElementById('chips').innerHTML = out;
}

drawKline();
drawEne();
drawChips();
```
